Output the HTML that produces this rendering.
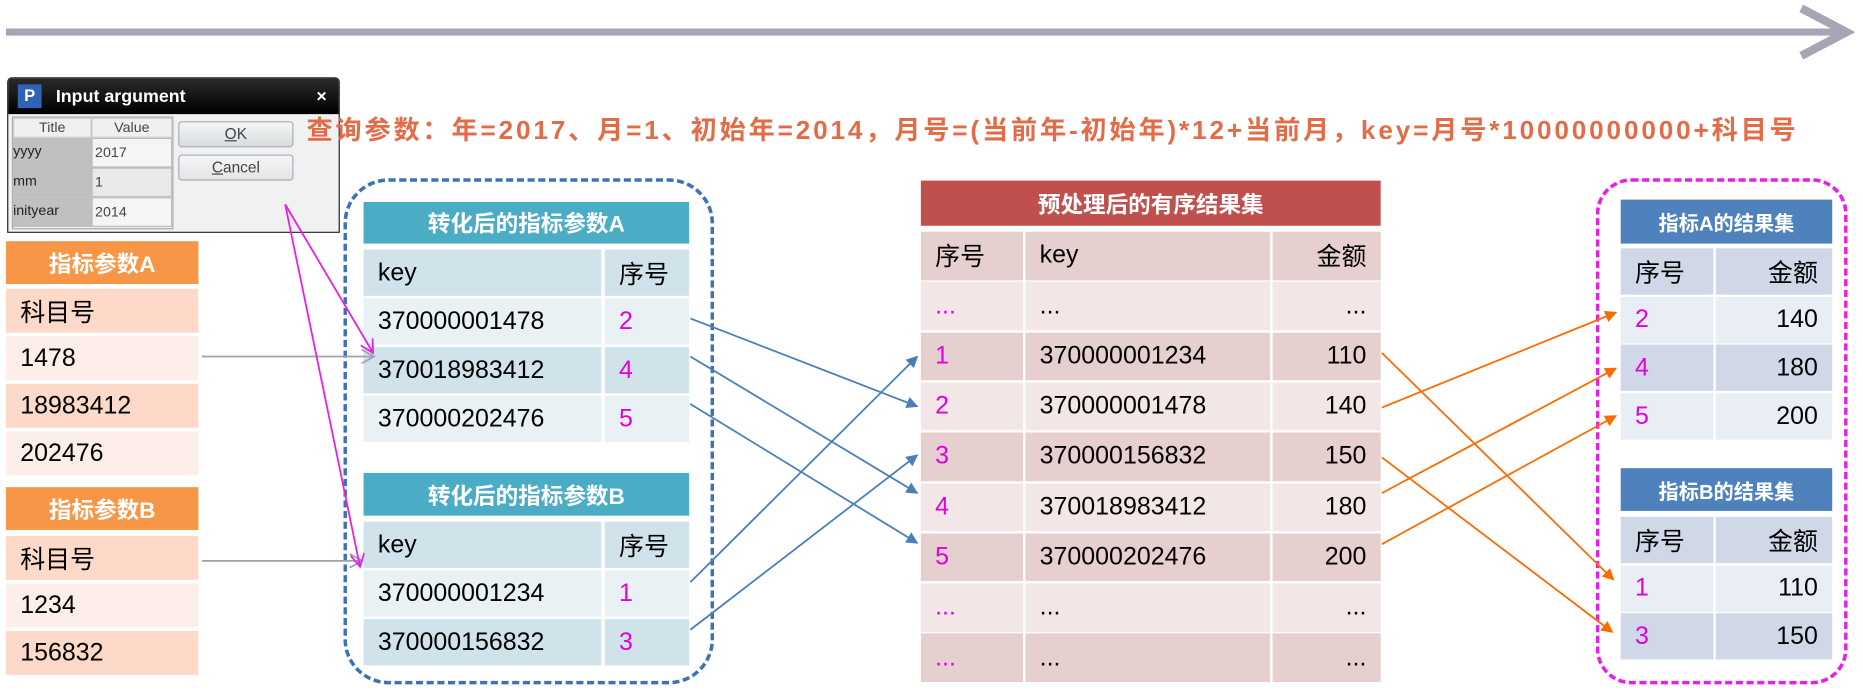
<!DOCTYPE html>
<html><head><meta charset="utf-8"><style>
*{margin:0;padding:0;box-sizing:border-box}
body{width:1863px;height:691px;overflow:hidden;background:#fff;font-family:"Liberation Sans","Noto Sans CJK SC",sans-serif}
#w{position:absolute;left:0;top:0;width:1568px;height:582px;transform:scale(1.1882);transform-origin:0 0}
.a{position:absolute}
.c{position:absolute;display:flex;align-items:center;font-size:21px;color:#000;padding-left:12px;white-space:nowrap}
.r{justify-content:flex-end;padding-right:12px;padding-left:0}
.ctr{justify-content:center;padding:0;color:#fff;font-weight:bold;font-size:19px}
.m{color:#e000e0}
</style></head><body><div id="w">
<svg class="a" style="left:0;top:0" width="1568" height="582">
<line x1="5" y1="27" x2="1552" y2="27" stroke="#a5a5b3" stroke-width="6"/>
<polyline points="1516,7 1554,27 1516,47" fill="none" stroke="#a5a5b3" stroke-width="7"/>
</svg>
<div class="a" style="left:6px;top:65px;width:280px;height:131px;background:#f0f1f1;border:1px solid #222;border-radius:4px 4px 0 0">
 <div style="height:30px;background:linear-gradient(#2a2a2a,#000);color:#fff;font-weight:bold;font-size:15px;display:flex;align-items:center;border-radius:3px 3px 0 0">
  <span style="display:inline-block;width:20px;height:20px;background:#2f63b8;margin:0 12px 0 8px;color:#fff;font-size:14px;text-align:center;line-height:18px">P</span>Input argument<span style="margin-left:auto;margin-right:10px">×</span></div>
 <div class="a" style="left:3px;top:32px;width:136px;height:95px;font-size:12px;color:#444;border:1px solid #aaa">
  <div style="display:flex;height:17px;text-align:center;line-height:15px"><div style="width:66px;background:#eef0f2;border:1px solid #ccc">Title</div><div style="width:68px;background:#eef0f2;border:1px solid #ccc">Value</div></div>
  <div style="display:flex;height:25px;line-height:23px"><div style="width:66px;background:#c0c0c0;color:#222">yyyy</div><div style="width:68px;background:#f4f5f6;border:1px solid #bbb;padding-left:2px">2017</div></div>
  <div style="display:flex;height:25px;line-height:23px"><div style="width:66px;background:#c0c0c0;color:#222">mm</div><div style="width:68px;background:#e8e9ea;border:1px solid #bbb;padding-left:2px">1</div></div>
  <div style="display:flex;height:25px;line-height:23px"><div style="width:66px;background:#c0c0c0;color:#222">inityear</div><div style="width:68px;background:#f4f5f6;border:1px solid #bbb;padding-left:2px">2014</div></div>
 </div>
 <div class="a" style="left:143px;top:36px;width:97px;height:22px;border:1px solid #aab;border-radius:3px;background:linear-gradient(#f4f5f6,#d9dcde);font-size:13px;text-align:center;line-height:20px;color:#444"><u>O</u>K</div>
 <div class="a" style="left:143px;top:64px;width:97px;height:22px;border:1px solid #aab;border-radius:3px;background:linear-gradient(#f4f5f6,#e3e5e6);font-size:13px;text-align:center;line-height:20px;color:#444"><u>C</u>ancel</div>
</div>
<div class="a" style="left:258px;top:92px;font-size:22px;letter-spacing:2.4px;font-weight:bold;color:#e36c48;white-space:nowrap">查询参数：年=2017、月=1、初始年=2014，月号=(当前年-初始年)*12+当前月，key=月号*10000000000+科目号</div>

<div class="c ctr" style="left:5px;top:203px;width:162px;height:36px;background:#f79646">指标参数A</div>
<div class="c" style="left:5px;top:243px;width:162px;height:37px;background:#fcd9c8">科目号</div>
<div class="c" style="left:5px;top:283px;width:162px;height:37px;background:#fdeeea">1478</div>
<div class="c" style="left:5px;top:323px;width:162px;height:37px;background:#fcd9c8">18983412</div>
<div class="c" style="left:5px;top:363px;width:162px;height:37px;background:#fdeeea">202476</div>
<div class="c ctr" style="left:5px;top:410px;width:162px;height:36px;background:#f79646">指标参数B</div>
<div class="c" style="left:5px;top:451px;width:162px;height:37px;background:#fcd9c8">科目号</div>
<div class="c" style="left:5px;top:491px;width:162px;height:37px;background:#fdeeea">1234</div>
<div class="c" style="left:5px;top:531px;width:162px;height:37px;background:#fcd9c8">156832</div>

<div class="a" style="left:289px;top:150px;width:312px;height:426px;border:3px dashed #3f72b5;border-radius:38px"></div>
<div class="c ctr" style="left:306px;top:170px;width:274px;height:35px;background:#4bacc6">转化后的指标参数A</div>
<div class="c" style="left:306px;top:210px;width:200px;height:39px;background:#d0e2ea">key</div><div class="c" style="left:509px;top:210px;width:71px;height:39px;background:#d0e2ea">序号</div>
<div class="c" style="left:306px;top:251px;width:200px;height:39px;background:#e9f1f5">370000001478</div><div class="c m" style="left:509px;top:251px;width:71px;height:39px;background:#e9f1f5">2</div>
<div class="c" style="left:306px;top:292px;width:200px;height:39px;background:#d0e2ea">370018983412</div><div class="c m" style="left:509px;top:292px;width:71px;height:39px;background:#d0e2ea">4</div>
<div class="c" style="left:306px;top:333px;width:200px;height:39px;background:#e9f1f5">370000202476</div><div class="c m" style="left:509px;top:333px;width:71px;height:39px;background:#e9f1f5">5</div>
<div class="c ctr" style="left:306px;top:398px;width:274px;height:36px;background:#4bacc6">转化后的指标参数B</div>
<div class="c" style="left:306px;top:439px;width:200px;height:39px;background:#d0e2ea">key</div><div class="c" style="left:509px;top:439px;width:71px;height:39px;background:#d0e2ea">序号</div>
<div class="c" style="left:306px;top:480px;width:200px;height:39px;background:#e9f1f5">370000001234</div><div class="c m" style="left:509px;top:480px;width:71px;height:39px;background:#e9f1f5">1</div>
<div class="c" style="left:306px;top:521px;width:200px;height:39px;background:#d0e2ea">370000156832</div><div class="c m" style="left:509px;top:521px;width:71px;height:39px;background:#d0e2ea">3</div>

<div class="c ctr" style="left:775px;top:152px;width:387px;height:38px;background:#c0504d">预处理后的有序结果集</div>

<div class="a" style="left:1343px;top:150px;width:212px;height:426px;border:3px dashed #e81ee8;border-radius:30px"></div>
<div class="c ctr" style="left:1364px;top:168px;width:178px;height:37px;background:#4f81bd;font-size:17px">指标A的结果集</div>
<div class="c ctr" style="left:1364px;top:394px;width:178px;height:36px;background:#4f81bd;font-size:17px">指标B的结果集</div>

<svg class="a" style="left:0;top:0" width="1568" height="582">
<defs>
<marker id="mb" markerWidth="10" markerHeight="10" refX="9" refY="5" orient="auto" markerUnits="userSpaceOnUse"><path d="M0,0 L10,5 L0,10 z" fill="#4a7ebb"/></marker>
<marker id="mo" markerWidth="10" markerHeight="10" refX="9" refY="5" orient="auto" markerUnits="userSpaceOnUse"><path d="M0,0 L10,5 L0,10 z" fill="#ff6a00"/></marker>
<marker id="mm" markerWidth="12" markerHeight="12" refX="11" refY="6" orient="auto" markerUnits="userSpaceOnUse"><path d="M0,0 L11,6 L0,12" fill="none" stroke="#e81ee8" stroke-width="1.5"/></marker>
<marker id="mg" markerWidth="12" markerHeight="12" refX="11" refY="6" orient="auto" markerUnits="userSpaceOnUse"><path d="M0,0 L11,6 L0,12" fill="none" stroke="#a0a0b0" stroke-width="1.5"/></marker>
</defs>
<line x1="170" y1="300" x2="315" y2="300" stroke="#a0a0b0" stroke-width="1.5" marker-end="url(#mg)"/>
<line x1="170" y1="472" x2="305" y2="472" stroke="#a0a0b0" stroke-width="1.5" marker-end="url(#mg)"/>
<line x1="240" y1="172" x2="314" y2="297" stroke="#e81ee8" stroke-width="1.5" marker-end="url(#mm)"/>
<line x1="240" y1="172" x2="303" y2="477" stroke="#e81ee8" stroke-width="1.5" marker-end="url(#mm)"/>
<g stroke="#4a7ebb" stroke-width="1.5" marker-end="url(#mb)">
<line x1="581" y1="268" x2="772" y2="342"/>
<line x1="581" y1="300" x2="772" y2="415"/>
<line x1="581" y1="340" x2="772" y2="457"/>
<line x1="581" y1="490" x2="772" y2="300"/>
<line x1="581" y1="530" x2="772" y2="383"/>
</g>
<g stroke="#ff6a00" stroke-width="1.5" marker-end="url(#mo)">
<line x1="1163" y1="297" x2="1358" y2="488"/>
<line x1="1163" y1="343" x2="1360" y2="263"/>
<line x1="1163" y1="385" x2="1357" y2="532"/>
<line x1="1163" y1="415" x2="1360" y2="310"/>
<line x1="1163" y1="458" x2="1360" y2="350"/>
</g>
</svg>
</div>
<script>
var w=document.getElementById('w');
function cell(l,t,wd,h,bg,txt,cls){var d=document.createElement('div');d.className='c '+(cls||'');d.style.cssText='left:'+l+'px;top:'+t+'px;width:'+wd+'px;height:'+h+'px;background:'+bg;d.textContent=txt;w.insertBefore(d,w.querySelector('svg:last-of-type'));}
var rows=[['序号','key','金额'],['...','...','...'],['1','370000001234','110'],['2','370000001478','140'],['3','370000156832','150'],['4','370018983412','180'],['5','370000202476','200'],['...','...','...'],['...','...','...']];
var dk='#e6cfcf',lt='#f2e6e6';
for(var i=0;i<rows.length;i++){var t=195+i*42.3,bg=(i%2==0)?dk:lt;
cell(775,t,86,40.5,bg,rows[i][0],i?'m':'');cell(863,t,206,40.5,bg,rows[i][1]);cell(1071,t,91,40.5,bg,rows[i][2],'r');}
var A=[['序号','金额'],['2','140'],['4','180'],['5','200']],B=[['序号','金额'],['1','110'],['3','150']];
function rt(arr,t0){for(var i=0;i<arr.length;i++){var t=t0+i*40.7,bg=(i%2==0)?'#d0d8e8':'#e9edf4';
cell(1364,t,78,39,bg,arr[i][0],i?'m':'');cell(1444,t,98,39,bg,arr[i][1],'r');}}
rt(A,209);rt(B,435);
</script>
</body></html>
